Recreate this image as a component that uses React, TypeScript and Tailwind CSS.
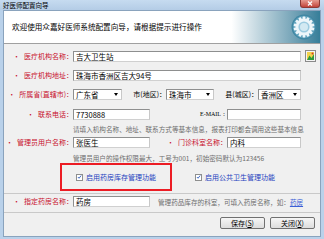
import React from 'react';

const font = { fontFamily: '"Noto Sans CJK SC", "Noto Sans", sans-serif' };

function Label({ text, w, bullet = true }: { text: string; w: string; bullet?: boolean }) {
  return (
    <div className={`${w} shrink-0 text-right text-[7px] leading-[11px] text-[#c8102e] whitespace-nowrap`}>
      {bullet && <span className="mr-[4px]">•</span>}
      {text}
    </div>
  );
}

function Input({ value = '', w }: { value?: string; w: string }) {
  return (
    <div className={`${w} h-[11px] shrink-0 bg-white border border-[#8e8f8f] border-b-[#d0d0d0] border-r-[#c8c8c8] px-[2px] text-[7.5px] leading-[9px] text-black whitespace-nowrap overflow-hidden`}>
      {value}
    </div>
  );
}

function Select({ value, w }: { value: string; w: string }) {
  return (
    <div className={`${w} h-[11px] shrink-0 bg-white border border-[#8e8f8f] border-b-[#d0d0d0] border-r-[#c8c8c8] pl-[2px] flex items-center justify-between text-[7.5px] leading-[9px] text-black`}>
      <span>{value}</span>
      <span className="mr-[3px] w-0 h-0 border-l-[2.5px] border-r-[2.5px] border-t-[3px] border-l-transparent border-r-transparent border-t-black" />
    </div>
  );
}

function Check({ text }: { text: string }) {
  return (
    <div className="flex items-center gap-[3px] text-[7px] leading-[9px] text-[#1f3fbf] whitespace-nowrap">
      <span className="w-[7px] h-[7px] border border-[#8e8f8f] bg-white flex items-center justify-center">
        <svg width="6" height="6" viewBox="0 0 6 6">
          <path d="M1 3 L2.5 4.5 L5 1.2" fill="none" stroke="#1d4fb8" strokeWidth="1" />
        </svg>
      </span>
      {text}
    </div>
  );
}

function Button({ text, k }: { text: string; k: string }) {
  return (
    <div className="w-[45px] h-[12px] rounded-[2px] border border-[#707070] bg-gradient-to-b from-[#f6f6f6] to-[#dddddd] flex items-center justify-center text-[7px] leading-[9px] text-black">
      {text}(<span className="underline">{k}</span>)
    </div>
  );
}

function Gear() {
  const teeth = Array.from({ length: 14 }, (_, i) => (i * 360) / 14);
  return (
    <svg width="26" height="26" viewBox="0 0 26 26">
      <circle cx="13" cy="13" r="12.5" fill="#3f86a2" />
      <circle cx="13" cy="13" r="11.2" fill="#5c9fba" />
      <g fill="#eef6fa">
        {teeth.map((a) => (
          <rect key={a} x="11.6" y="2.6" width="2.8" height="3.2" rx="0.6" transform={`rotate(${a} 13 13)`} />
        ))}
        <circle cx="13" cy="13" r="8.4" />
      </g>
      <circle cx="13" cy="13" r="5.6" fill="#9ccbe0" />
      <circle cx="13" cy="13" r="4" fill="#d3e9f2" />
    </svg>
  );
}

function PicIcon() {
  return (
    <svg width="11" height="12" viewBox="0 0 11 12">
      <rect x="0.5" y="0.5" width="10" height="11" fill="#f4f4f4" stroke="#8a8a8a" />
      <rect x="2" y="2" width="7" height="8" fill="#f2d24a" />
      <path d="M2 10 L4.5 5.5 L6.5 8 L9 4 L9 10 Z" fill="#2e9a3a" />
      <circle cx="7.5" cy="3.5" r="1" fill="#d23b2a" />
    </svg>
  );
}

export default function App() {
  return (
    <div className="w-[324px] h-[239px] bg-[#b9d1ea] flex flex-col overflow-hidden" style={font}>
      {/* title bar */}
      <div className="h-[10px] shrink-0 flex items-start justify-between bg-gradient-to-b from-[#c6dbf0] to-[#b4cce6]">
        <div className="pl-[3px] pt-[1px] text-[6.5px] leading-[8px] text-black">好医师配置向导</div>
        <div className="mr-[4px] w-[20px] h-[8px] rounded-b-[3px] bg-gradient-to-b from-[#e59a90] to-[#c2423a] border border-[#8a3a35] border-t-0 flex items-center justify-center">
          <svg width="6" height="5" viewBox="0 0 6 5">
            <path d="M1 0.5 L5 4.5 M5 0.5 L1 4.5" stroke="white" strokeWidth="1.2" />
          </svg>
        </div>
      </div>

      {/* client */}
      <div className="mx-[3px] flex-1 flex flex-col bg-[#f0f0f0] border border-[#8aa3bd]">
        {/* header */}
        <div className="h-[33px] shrink-0 flex items-center justify-between bg-gradient-to-r from-white from-[72%] to-[#357e99] border-b border-[#a0a0a0]">
          <div className="pl-[8px] text-[7.6px] leading-[10px] text-black whitespace-nowrap">欢迎使用众嘉好医师系统配置向导，请根据提示进行操作</div>
          <div className="mr-[3px]">
            <Gear />
          </div>
        </div>

        {/* body */}
        <div className="flex flex-col">
          <div className="mt-[6px] flex items-center">
            <Label text="医疗机构名称：" w="w-[69px]" />
            <Input value="吉大卫生站" w="w-[228px]" />
            <div className="ml-[4px]">
              <PicIcon />
            </div>
          </div>

          <div className="mt-[8px] flex items-center">
            <Label text="医疗机构地址：" w="w-[69px]" />
            <Input value="珠海市香洲区吉大94号" w="w-[228px]" />
          </div>

          <div className="mt-[8px] flex items-center">
            <Label text="所属省(直辖市)：" w="w-[69px]" />
            <Select value="广东省" w="w-[49px]" />
            <div className="w-[44px] shrink-0 text-right text-[7px] leading-[11px] text-black">市(地区)：</div>
            <Select value="珠海市" w="w-[48px]" />
            <div className="w-[44px] shrink-0 text-right text-[7px] leading-[11px] text-black">县(城区)：</div>
            <Select value="香洲区" w="w-[43px]" />
          </div>

          <div className="mt-[9px] flex items-center">
            <Label text="联系电话：" w="w-[69px]" />
            <Input value="7730888" w="w-[77px]" />
            <div className="w-[77px] shrink-0 text-right text-[6px] leading-[11px] text-black" style={{ fontFamily: '"Liberation Serif", serif' }}>E-MAIL：</div>
            <Input w="w-[74px]" />
          </div>

          <div className="mt-[4px] pl-[69px] text-[6.6px] leading-[10px] text-[#6d6d6d] whitespace-nowrap">
            请填入机构名称、地址、联系方式等基本信息，报表打印都会调用这些基本信息
          </div>

          <div className="mt-[3px] flex items-center">
            <Label text="管理员用户名称：" w="w-[69px]" />
            <Input value="张医生" w="w-[77px]" />
            <Label text="门诊科室名称：" w="w-[77px]" />
            <Input value="内科" w="w-[74px]" />
          </div>

          <div className="mt-[5px] pl-[69px] text-[6.6px] leading-[10px] text-[#6d6d6d] whitespace-nowrap">
            管理员用户的操作权限最大，工号为001，初始密码默认为123456
          </div>

          <div className="flex items-start h-[28px]">
            <div className="ml-[56px] w-[112px] h-[28px] border-[2px] border-[#ec1c24] pl-[14px] flex items-center">
              <Check text="启用药房库存管理功能" />
            </div>
            <div className="ml-[23px] h-[28px] flex items-center">
              <Check text="启用公共卫生管理功能" />
            </div>
          </div>

          <div className="mt-[2px] border-t border-[#c9c9c9]" />

          <div className="mt-[2px] flex items-center">
            <Label text="指定药房名称：" w="w-[69px]" />
            <Input value="药房" w="w-[77px]" />
            <div className="ml-[8px] text-[6.6px] leading-[10px] text-[#6d6d6d] whitespace-nowrap">
              管理药品库存的科室，可填入药房名称，如：<span className="text-[#3b5fd6] underline">药房</span>
            </div>
          </div>
        </div>

        <div className="mt-[5px] border-t border-[#c9c9c9]" />
        <div className="flex-1 flex items-start justify-end gap-[5px] pt-[4px] pr-[5px]">
          <Button text="保存" k="S" />
          <Button text="关闭" k="X" />
        </div>
      </div>
      <div className="h-[2px] shrink-0" />
    </div>
  );
}
